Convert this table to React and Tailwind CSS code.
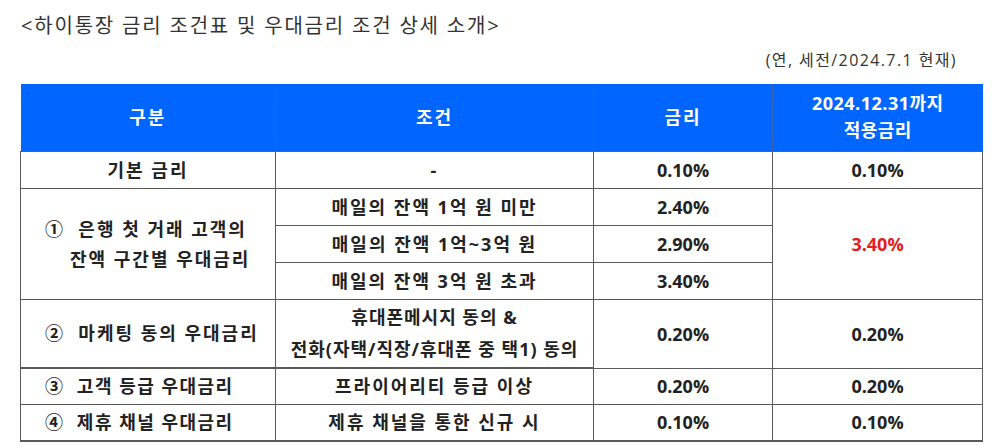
import React from 'react';

const font = {fontFamily: '"Open Sans", "Noto Sans CJK KR", sans-serif'};

const Cell = ({children, className = '', ...rest}) => (
  <td
    {...rest}
    className={'border border-[#5a5a5a] text-center align-middle p-0 ' + className}
  >
    {children}
  </td>
);

const Num = ({children, className = '', ...rest}) => (
  <Cell {...rest} className={'tracking-normal ' + className}>{children}</Cell>
);

// left aligned label used for the numbered benefit rows
const Label = ({children, className = '', ...rest}) => (
  <Cell {...rest} className={'text-left pl-[24px] ' + className}>{children}</Cell>
);

export default function App() {
  return (
    <div className="w-[995px] h-[448px] bg-white text-[#222] overflow-hidden" style={font}>
      <div className="pl-[21px] pt-[11px] text-[20px] leading-[30px] tracking-[1.8px] text-[#333]">
        &lt;하이통장 금리 조건표 및 우대금리 조건 상세 소개&gt;
      </div>
      <div className="pr-[38px] pt-[8px] text-right text-[16px] leading-[22px] tracking-[1.4px] text-[#333]">
        (연, 세전/2024.7.1 현재)
      </div>
      <table className="ml-[20px] mt-[13px] table-fixed border-collapse text-[18px] leading-[24px] font-bold tracking-[2px]">
        <colgroup>
          <col className="w-[255px]" />
          <col className="w-[318px]" />
          <col className="w-[179px]" />
          <col className="w-[210px]" />
        </colgroup>
        <thead>
          <tr className="h-[67px] bg-[#0066ff] text-white">
            <th className="border-r border-[#3f63a8] border-b font-bold">구분</th>
            <th className="border-r border-[#3f63a8] border-b font-bold">조건</th>
            <th className="border-r border-[#3f63a8] border-b font-bold">금리</th>
            <th className="border-b border-[#3f63a8] font-bold leading-[27px] tracking-[0.5px]">
              2024.12.31까지
              <br />
              적용금리
            </th>
          </tr>
        </thead>
        <tbody>
          <tr className="h-[37px]">
            <Cell>기본 금리</Cell>
            <Cell>-</Cell>
            <Num>0.10%</Num>
            <Num>0.10%</Num>
          </tr>
          <tr className="h-[37px]">
            <Label rowSpan={3} className="leading-[30px]">
              <div>①&nbsp;&nbsp;은행 첫 거래 고객의</div>
              <div className="pl-[25px]">잔액 구간별 우대금리</div>
            </Label>
            <Cell>매일의 잔액 1억 원 미만</Cell>
            <Num>2.40%</Num>
            <Num rowSpan={3} className="text-[#e02020]">3.40%</Num>
          </tr>
          <tr className="h-[37px]">
            <Cell>매일의 잔액 1억~3억 원</Cell>
            <Num>2.90%</Num>
          </tr>
          <tr className="h-[37px]">
            <Cell>매일의 잔액 3억 원 초과</Cell>
            <Num>3.40%</Num>
          </tr>
          <tr className="h-[69px]">
            <Label className="border-b-2">②&nbsp;&nbsp;마케팅 동의 우대금리</Label>
            <Cell className="leading-[32px] border-b-2 tracking-[1px]">
              휴대폰메시지 동의 &amp;
              <br />
              전화(자택/직장/휴대폰 중 택1) 동의
            </Cell>
            <Num>0.20%</Num>
            <Num>0.20%</Num>
          </tr>
          <tr className="h-[36px]">
            <Label className="tracking-[1.5px]">③&nbsp;&nbsp;고객 등급 우대금리</Label>
            <Cell>프라이어리티 등급 이상</Cell>
            <Num>0.20%</Num>
            <Num>0.20%</Num>
          </tr>
          <tr className="h-[37px]">
            <Label className="border-b-2 tracking-[1.5px]">④&nbsp;&nbsp;제휴 채널 우대금리</Label>
            <Cell className="border-b-2">제휴 채널을 통한 신규 시</Cell>
            <Num className="border-b-2">0.10%</Num>
            <Num className="border-b-2">0.10%</Num>
          </tr>
        </tbody>
      </table>
    </div>
  );
}
